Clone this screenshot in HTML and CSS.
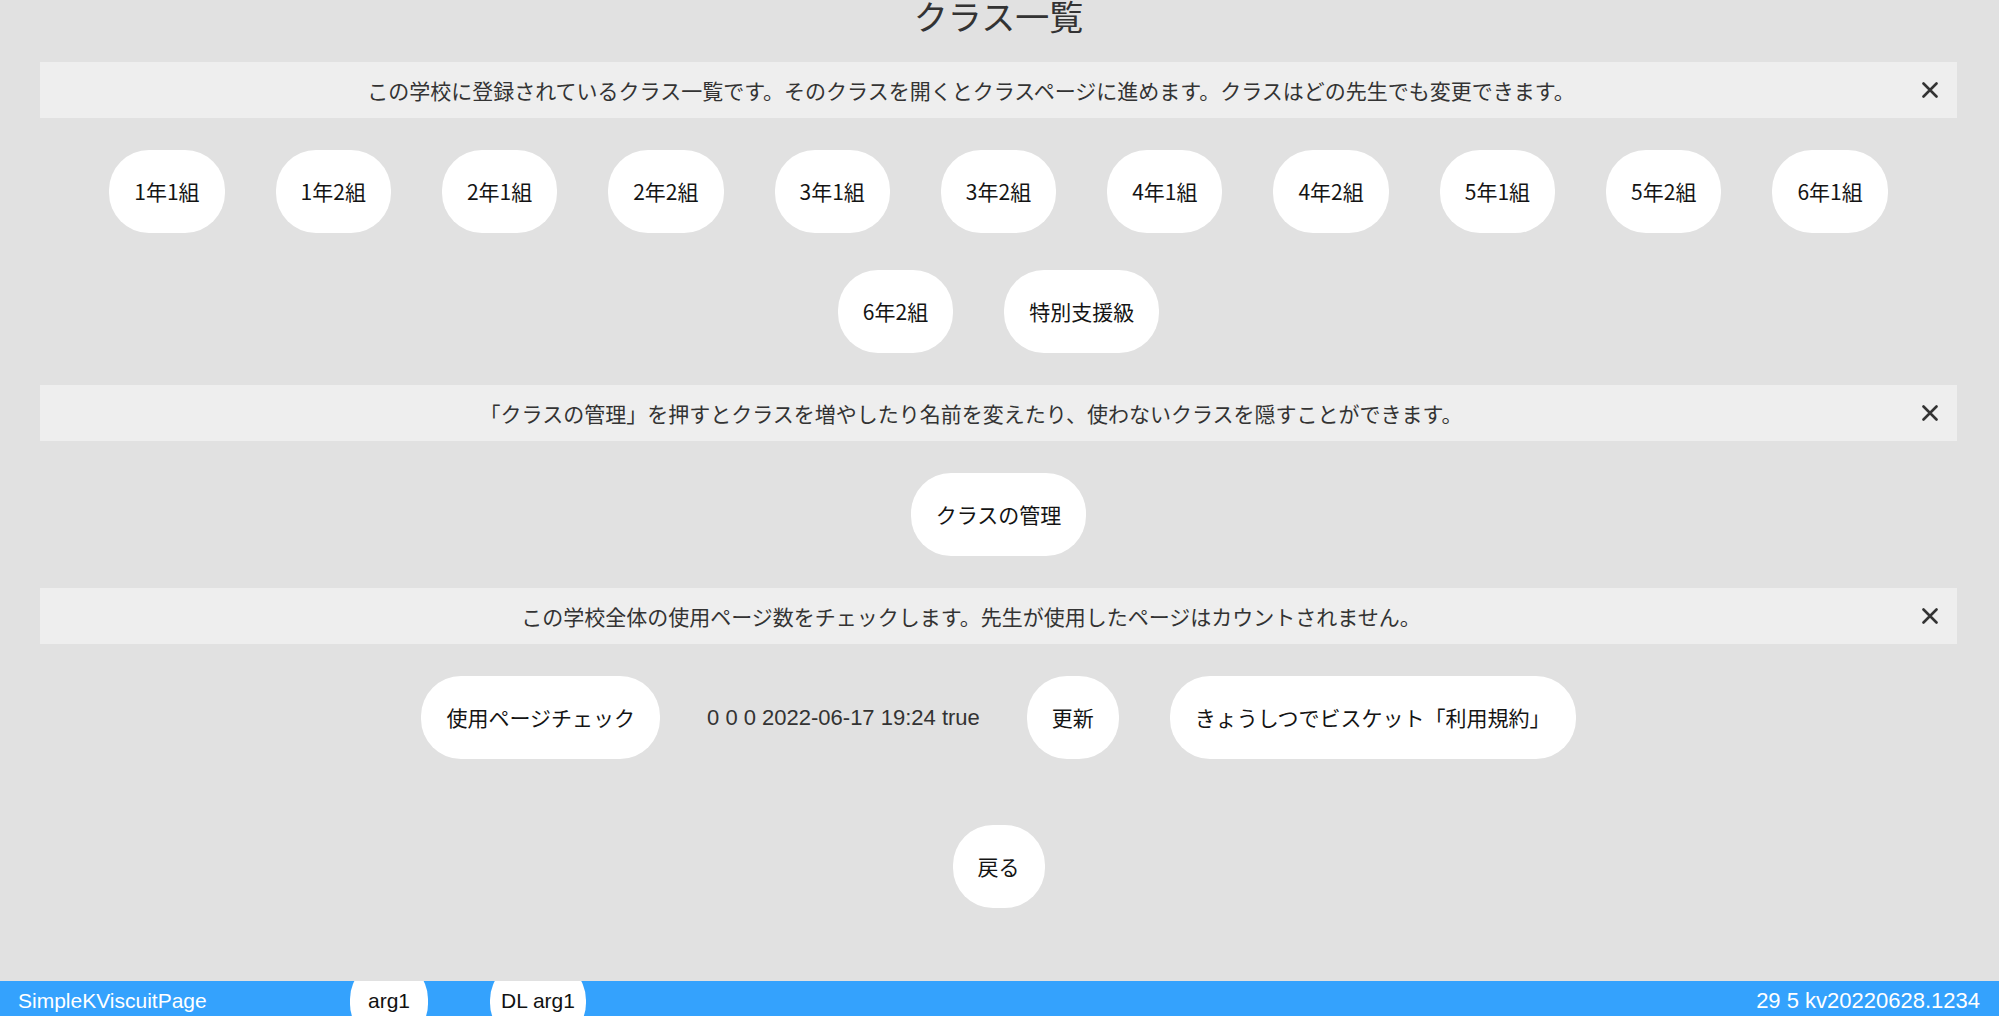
FILE: index.html
```html
<!DOCTYPE html>
<html lang="ja">
<head>
<meta charset="utf-8">
<title>クラス一覧</title>
<link rel="stylesheet" href="styles.css">
</head>
<body>
<div class="page">
  <main class="main">
    <h1 class="title">クラス一覧</h1>

    <div class="banner">
      <div class="banner-text">この学校に登録されているクラス一覧です。そのクラスを開くとクラスページに進めます。クラスはどの先生でも変更できます。</div>
      <button class="banner-close" aria-label="閉じる"><svg width="16" height="16" viewBox="0 0 16 16"><path d="M1.5 1.5L14.5 14.5M14.5 1.5L1.5 14.5" stroke="#333" stroke-width="2.6" stroke-linecap="round"/></svg></button>
    </div>
    <div class="btn-group">
      <button class="btn">1年1組</button>
      <button class="btn">1年2組</button>
      <button class="btn">2年1組</button>
      <button class="btn">2年2組</button>
      <button class="btn">3年1組</button>
      <button class="btn">3年2組</button>
      <button class="btn">4年1組</button>
      <button class="btn">4年2組</button>
      <button class="btn">5年1組</button>
      <button class="btn">5年2組</button>
      <button class="btn">6年1組</button>
      <button class="btn">6年2組</button>
      <button class="btn">特別支援級</button>
    </div>

    <div class="banner">
      <div class="banner-text">「クラスの管理」を押すとクラスを増やしたり名前を変えたり、使わないクラスを隠すことができます。</div>
      <button class="banner-close" aria-label="閉じる"><svg width="16" height="16" viewBox="0 0 16 16"><path d="M1.5 1.5L14.5 14.5M14.5 1.5L1.5 14.5" stroke="#333" stroke-width="2.6" stroke-linecap="round"/></svg></button>
    </div>
    <div class="btn-group">
      <button class="btn">クラスの管理</button>
    </div>

    <div class="banner">
      <div class="banner-text">この学校全体の使用ページ数をチェックします。先生が使用したページはカウントされません。</div>
      <button class="banner-close" aria-label="閉じる"><svg width="16" height="16" viewBox="0 0 16 16"><path d="M1.5 1.5L14.5 14.5M14.5 1.5L1.5 14.5" stroke="#333" stroke-width="2.6" stroke-linecap="round"/></svg></button>
    </div>
    <div class="btn-group">
      <button class="btn">使用ページチェック</button>
      <span class="stat">0 0 0 2022-06-17 19:24 true</span>
      <button class="btn">更新</button>
      <button class="btn">きょうしつでビスケット「利用規約」</button>
    </div>

    <div class="btn-group back-row">
      <button class="btn">戻る</button>
    </div>
  </main>

  <footer class="footer">
    <span class="footer-label">SimpleKViscuitPage</span>
    <button class="pill pill-arg">arg1</button>
    <button class="pill pill-dl">DL arg1</button>
    <span class="footer-version">29 5 kv20220628.1234</span>
  </footer>
</div>
</body>
</html>
```

FILE: styles.css
```css
* {
  box-sizing: border-box;
}

html, body {
  margin: 0;
  padding: 0;
}

body {
  background: #e1e1e1;
  font-family: "Noto Sans CJK JP", sans-serif;
  color: #333;
  overflow: hidden;
}

.page {
  display: flex;
  flex-direction: column;
  height: 100vh;
}

.main {
  flex: 1;
  padding: 0 42px 0 40px;
}

.title {
  margin: 0;
  padding-bottom: 31px;
  font-size: 34px;
  font-weight: normal;
  line-height: 31px;
  text-align: center;
  color: #333;
}

.banner {
  display: flex;
  align-items: center;
  height: 56px;
  background: #eeeeee;
}

.banner-text {
  flex: 1;
  text-align: center;
  font-size: 21px;
  line-height: 1;
  color: #333;
}

.banner-close {
  width: 55px;
  height: 100%;
  display: flex;
  align-items: center;
  justify-content: center;
  padding: 0;
  border: 0;
  background: none;
}

.btn-group {
  display: flex;
  flex-wrap: wrap;
  justify-content: center;
  align-items: center;
  gap: 37px 51px;
  padding: 32px 0;
}

.back-row {
  padding-top: 34px;
}

.btn {
  height: 83px;
  padding: 0 25px;
  border: 0;
  border-radius: 40px;
  background: #fff;
  font-family: "Noto Sans CJK JP", sans-serif;
  font-size: 21px;
  line-height: 1;
  color: #141414;
  display: inline-flex;
  align-items: center;
  justify-content: center;
  white-space: nowrap;
}

.stat {
  margin: 0 -4px;
  font-family: "Liberation Sans", "Noto Sans CJK JP", sans-serif;
  font-size: 22px;
  color: #333;
  white-space: nowrap;
}

.footer {
  flex-shrink: 0;
  height: 35px;
  background: #34a2fd;
  display: flex;
  align-items: center;
  overflow: hidden;
  padding: 5px 19px 0 18px;
  font-family: "Liberation Sans", "Noto Sans CJK JP", sans-serif;
  font-size: 21px;
}

.footer-label {
  flex: 0 0 332px;
  color: #fff;
}

.pill {
  flex-shrink: 0;
  height: 83px;
  border: 0;
  border-radius: 40px;
  background: #fff;
  color: #111;
  font-family: "Liberation Sans", sans-serif;
  font-size: 21px;
  display: inline-flex;
  align-items: center;
  justify-content: center;
}

.pill-arg {
  padding: 0 18px;
}

.pill-dl {
  margin-left: 62px;
  padding: 0 11px;
}

.footer-version {
  margin-left: auto;
  color: #fff;
  font-size: 22px;
}
```
